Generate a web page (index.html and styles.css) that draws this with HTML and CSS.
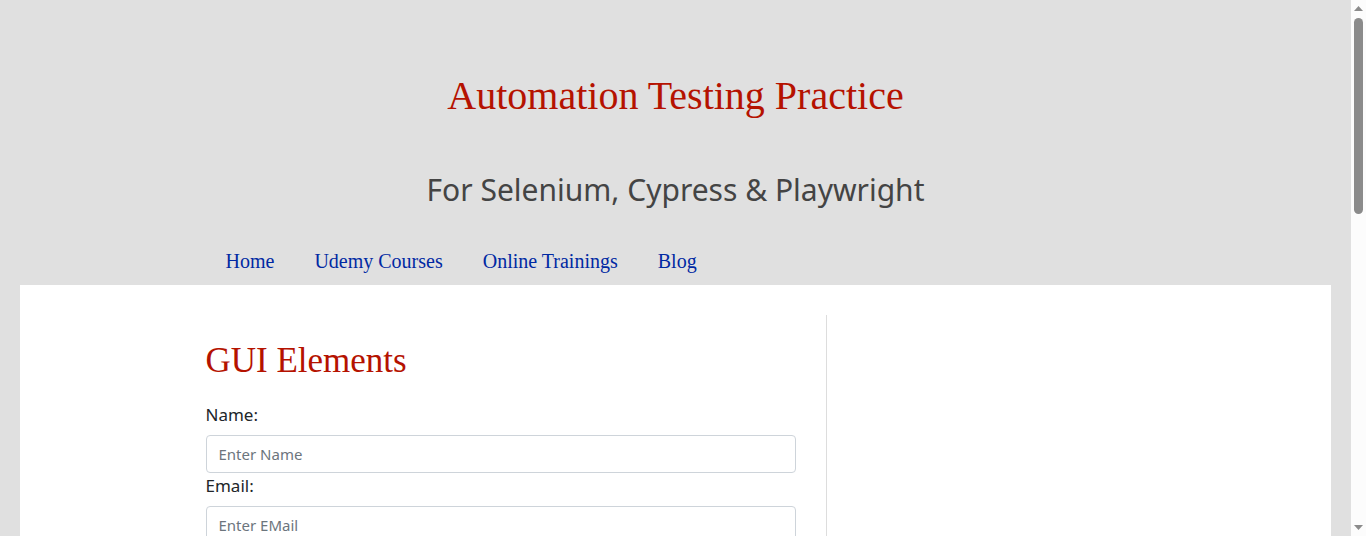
FILE: index.html
```html
<!DOCTYPE html>
<html lang="en">
<head>
<meta charset="utf-8">
<meta name="viewport" content="width=device-width, initial-scale=1">
<title>Automation Testing Practice</title>
<link rel="stylesheet" href="styles.css">
</head>
<body>
<div class="window">
  <div class="page">
    <header class="header">
      <h1 class="title">Automation Testing Practice</h1>
      <p class="subtitle">For Selenium, Cypress &amp; Playwright</p>
      <nav class="tabs">
        <a href="#">Home</a>
        <a href="#">Udemy Courses</a>
        <a href="#">Online Trainings</a>
        <a href="#">Blog</a>
      </nav>
    </header>
    <main class="content">
      <div class="columns">
        <form class="form">
          <h2 class="heading">GUI Elements</h2>
          <label for="name">Name:</label>
          <input id="name" type="text" placeholder="Enter Name">
          <label for="email">Email:</label>
          <input id="email" type="text" placeholder="Enter EMail">
        </form>
        <aside class="sidebar"></aside>
      </div>
    </main>
  </div>
  <div class="scrollbar" aria-hidden="true">
    <svg class="arrow" width="9" height="5" viewBox="0 0 9 5"><path d="M4.5 0 9 5H0z"/></svg>
    <div class="thumb"></div>
    <svg class="arrow arrow-down" width="9" height="5" viewBox="0 0 9 5"><path d="M0 0h9L4.5 5z"/></svg>
  </div>
</div>
</body>
</html>
```

FILE: styles.css
```css
* {
  box-sizing: border-box;
}

body {
  margin: 0;
  background: #e0e0e0;
  color: #212529;
  font-family: "Segoe UI", "Noto Sans", sans-serif;
}

.window {
  display: flex;
  height: 100vh;
  overflow: hidden;
}

.page {
  flex: 1;
  display: flex;
  flex-direction: column;
  padding: 0 20px;
}

.header {
  flex: none;
  width: 100%;
  max-width: 960px;
  margin: 0 auto;
  padding-top: 72px;
}

.title,
.subtitle,
.heading {
  margin: 0;
  font-weight: 400;
}

.title,
.heading,
.tabs {
  font-family: "Liberation Serif", "Times New Roman", serif;
}

.title {
  color: #b51200;
  font-size: 40px;
  line-height: 48px;
  text-align: center;
}

.subtitle {
  margin-top: 46px;
  color: #444;
  font-size: 30px;
  line-height: 48px;
  text-align: center;
}

.tabs {
  display: flex;
  margin-top: 23px;
  padding-left: 10px;
}

.tabs a {
  padding: 12px 20px 11px;
  color: #0029a3;
  font-size: 20px;
  line-height: 25px;
  text-decoration: none;
}

.content {
  flex: 1;
  padding: 30px 20px 0;
  background: #fff;
}

.columns {
  display: grid;
  grid-template-columns: 630px 1fr;
  width: 100%;
  max-width: 960px;
  height: 100%;
  margin: 0 auto;
}

.form {
  display: flex;
  flex-direction: column;
  padding: 24px 30px 0 10px;
}

.heading {
  margin-bottom: 20px;
  color: #b51200;
  font-size: 35px;
  line-height: 43px;
}

.form label {
  margin-bottom: 8px;
  font-size: 17px;
  line-height: 25px;
}

.form input {
  flex: none;
  width: 100%;
  height: 38px;
  padding: 6px 12px;
  border: 1px solid #ced4da;
  border-radius: 4px;
  background: #fff;
  color: #495057;
  font: 15px/24px "Segoe UI", "Noto Sans", sans-serif;
}

.form input::placeholder {
  color: #6c757d;
  opacity: 1;
}

.sidebar {
  border-left: 1px solid #dddddd;
}

.scrollbar {
  flex: none;
  display: flex;
  flex-direction: column;
  align-items: center;
  width: 15px;
  padding: 6px 0;
  background: #fcfcfc;
}

.arrow {
  flex: none;
  fill: #8b8b8b;
}

.thumb {
  width: 9px;
  height: 196px;
  margin-top: 7px;
  border-radius: 5px;
  background: #8b8b8b;
}

.arrow-down {
  margin-top: auto;
}
```
